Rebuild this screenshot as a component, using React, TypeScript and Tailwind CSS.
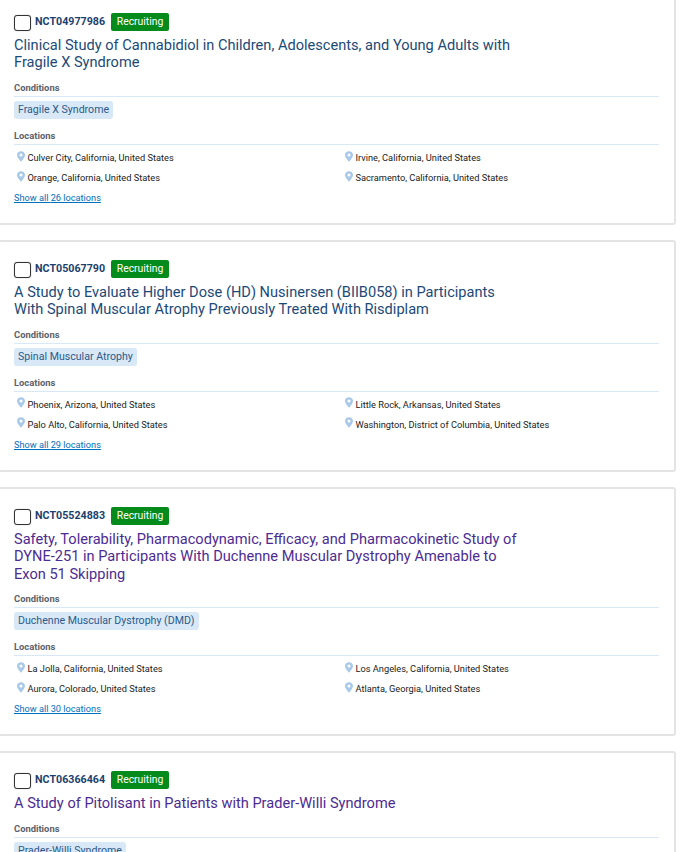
const studies = [
  {
    id: "NCT04977986",
    title: "Clinical Study of Cannabidiol in Children, Adolescents, and Young Adults with Fragile X Syndrome",
    condition: "Fragile X Syndrome",
    locs: ["Culver City, California, United States", "Irvine, California, United States", "Orange, California, United States", "Sacramento, California, United States"],
    count: 26,
    visited: false,
  },
  {
    id: "NCT05067790",
    title: "A Study to Evaluate Higher Dose (HD) Nusinersen (BIIB058) in Participants With Spinal Muscular Atrophy Previously Treated With Risdiplam",
    condition: "Spinal Muscular Atrophy",
    locs: ["Phoenix, Arizona, United States", "Little Rock, Arkansas, United States", "Palo Alto, California, United States", "Washington, District of Columbia, United States"],
    count: 29,
    visited: false,
  },
  {
    id: "NCT05524883",
    title: "Safety, Tolerability, Pharmacodynamic, Efficacy, and Pharmacokinetic Study of DYNE-251 in Participants With Duchenne Muscular Dystrophy Amenable to Exon 51 Skipping",
    condition: "Duchenne Muscular Dystrophy (DMD)",
    locs: ["La Jolla, California, United States", "Los Angeles, California, United States", "Aurora, Colorado, United States", "Atlanta, Georgia, United States"],
    count: 30,
    visited: true,
  },
  {
    id: "NCT06366464",
    title: "A Study of Pitolisant in Patients with Prader-Willi Syndrome",
    condition: "Prader-Willi Syndrome",
    locs: [],
    count: 0,
    visited: true,
  },
];

function Pin() {
  return (
    <svg width="8" height="11" viewBox="0 0 9 12" className="shrink-0 mt-[-4px]">
      <path
        fillRule="evenodd"
        d="M4.5 0C2 0 0 1.9 0 4.3 0 7.2 3.3 10 4.5 12 5.7 10 9 7.2 9 4.3 9 1.9 7 0 4.5 0Zm0 2.6a1.7 1.7 0 1 1 0 3.4 1.7 1.7 0 0 1 0-3.4Z"
        fill="#a9c9e8"
      />
    </svg>
  );
}

function Heading({ children }: { children: string }) {
  return (
    <div className="h-[16px] border-b border-[#d9e8f6] text-[9.4px] leading-[14px] font-bold text-[#5b616b]">
      {children}
    </div>
  );
}

function Card({ s }: { s: (typeof studies)[number] }) {
  return (
    <div className="border-2 border-[#e4e4e4] rounded-[3px] bg-white pl-[14px] pr-[15px] pt-[18px] pb-[16.7px]">
      <div className="flex items-center h-[18px]">
        <span className="w-[17px] h-[16px] border-[1.5px] border-[#333] rounded-[3px] bg-white mt-[2px] shadow-[0_0_1px_#888]" />
        <span className="ml-[4px] text-[10.7px] font-bold text-[#1c3f6e] leading-[18px]">{s.id}</span>
        <span className="ml-[6px] h-[18px] w-[58px] bg-[#058b1c] rounded-[2px] text-white text-[10.4px] leading-[18px] text-center font-normal">
          Recruiting
        </span>
      </div>
      <div
        className={
          "mt-[6px] w-[510px] text-[14.6px] leading-[17.6px] " + (s.visited ? "text-[#4c2c92]" : "text-[#1c4a78]")
        }
      >
        {s.title}
      </div>
      <div className="mt-[9px]">
        <Heading>Conditions</Heading>
      </div>
      <div className="mt-[4px] flex">
        <span className="h-[18px] px-[4px] bg-[#d9e8f6] rounded-[3px] text-[10.6px] leading-[17px] text-[#2a5a8c]">
          {s.condition}
        </span>
      </div>
      {s.locs.length > 0 && (
        <>
          <div className="mt-[10px]">
            <Heading>Locations</Heading>
          </div>
          <div className="mt-[5px] grid grid-cols-[328px_1fr] gap-y-[4px]">
            {s.locs.map((l) => (
              <div key={l} className="flex items-center gap-[3px] h-[16px] pl-[3px] text-[9.25px] leading-[16px] text-[#212121]">
                <Pin />
                <span className="-ml-[0.5px]">{l}</span>
              </div>
            ))}
          </div>
          <div className="mt-[4px] h-[16px] text-[9.2px] leading-[16px] text-[#0071bc] underline">
            Show all {s.count} locations
          </div>
        </>
      )}
    </div>
  );
}

export default function App() {
  return (
    <div className="w-[684px] h-[852px] overflow-hidden bg-white font-['Roboto',sans-serif]">
      <div className="w-[678px] -ml-[2px] -mt-[7.2px] flex flex-col gap-[15px]">
        {studies.map((s) => (
          <Card key={s.id} s={s} />
        ))}
      </div>
    </div>
  );
}
